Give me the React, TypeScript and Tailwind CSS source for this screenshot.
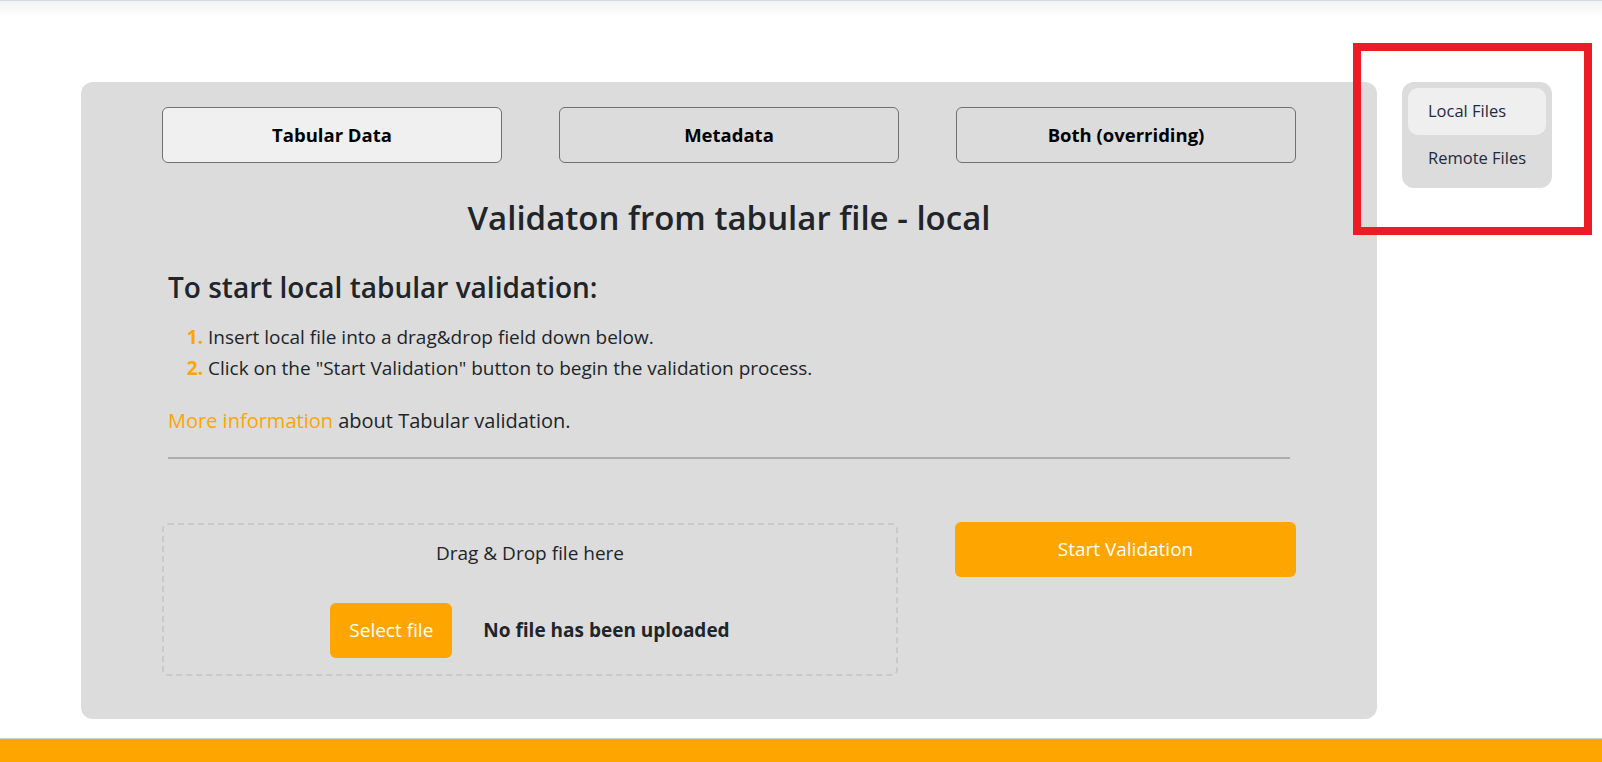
import React from 'react';

type Mode = { id: string; label: string };

const MODES: Mode[] = [
	{ id: 'tabular', label: 'Tabular Data' },
	{ id: 'metadata', label: 'Metadata' },
	{ id: 'both', label: 'Both (overriding)' },
];

const STEPS = [
	'Insert local file into a drag&drop field down below.',
	'Click on the "Start Validation" button to begin the validation process.',
];

function ModeTabs(props: { active: string; onPick: (id: string) => void }) {
	const { active, onPick } = props;
	return (
		<div className="flex justify-between">
			{MODES.map(m => (
				<button
					key={m.id}
					onClick={() => onPick(m.id)}
					className={`w-[340px] h-[56px] rounded-[6px] border border-[#707070] text-[18.5px] font-bold text-black ${active === m.id ? 'bg-[#f0f0f0]' : 'bg-[#dcdcdc]'}`}
				>
					{m.label}
				</button>
			))}
		</div>
	);
}

function DropZone() {
	return (
		<div className="w-[736px] rounded-[6px] border-2 border-dashed border-[#c9c9c9] pt-[14px] pb-[16px] text-center">
			<p className="text-[19px] leading-[28px]">Drag &amp; Drop file here</p>
			<div className="mt-[36px] flex items-center justify-center gap-[31px]">
				<button className="h-[55px] w-[122px] rounded-[6px] bg-[#ffa500] text-[19px] text-white">Select file</button>
				<span className="text-[19px] font-bold">No file has been uploaded</span>
			</div>
		</div>
	);
}

function SideNav(props: { active: string; onPick: (id: string) => void }) {
	const items = [
		{ id: 'local', label: 'Local Files' },
		{ id: 'remote', label: 'Remote Files' },
	];
	return (
		<aside className="w-[150px] rounded-[12px] bg-[#dcdcdc] p-[6px]">
			{items.map(it => (
				<button
					key={it.id}
					onClick={() => props.onPick(it.id)}
					className={`block h-[47px] w-full rounded-[10px] pl-[20px] text-left text-[16.5px] text-[#212a3e] ${props.active === it.id ? 'bg-[#efefef]' : ''}`}
				>
					{it.label}
				</button>
			))}
		</aside>
	);
}

export default function App() {
	const [mode, setMode] = React.useState('tabular');
	const [source, setSource] = React.useState('local');
	return (
		<div className="relative min-h-screen bg-white font-['Open_Sans',sans-serif] text-[#212529]">
			<div className="h-[18px] border-t border-[#d5d9e3] bg-gradient-to-b from-[#f3f3f5] to-white" />
			<div className="flex items-start gap-[25px] pl-[81px] pt-[64px]">
				<main className="w-[1296px] rounded-[12px] bg-[#dcdcdc] px-[81px] pt-[25px] pb-[43px]">
					<ModeTabs active={mode} onPick={setMode} />
					<h2 className="mt-[36px] text-center text-[33px] font-semibold leading-[38px]">Validaton from tabular file - local</h2>
					<section className="px-[6px]">
						<h3 className="mt-[33px] text-[28px] font-semibold leading-[34px]">To start local tabular validation:</h3>
						<ol className="mt-[18px] list-decimal pl-[40px] text-[19px] leading-[31px] marker:font-bold marker:text-[#ffa500]">
							{STEPS.map(s => (
								<li key={s}>{s}</li>
							))}
						</ol>
						<p className="mt-[22px] text-[20px] leading-[29px]">
							<a className="text-[#ffa500]">More information</a> about Tabular validation.
						</p>
						<hr className="mt-[22px] border-t-2 border-[#adadad]" />
					</section>
					<div className="mt-[64px] flex items-start justify-between">
						<DropZone />
						<button className="mt-[-1px] h-[55px] w-[341px] rounded-[6px] bg-[#ffa500] text-[19px] text-white">Start Validation</button>
					</div>
				</main>
				<SideNav active={source} onPick={setSource} />
			</div>
			<div className="mt-[19px] h-[60px] border-t border-[#cfcfcf] bg-[#ffa500]" />
			<div className="pointer-events-none absolute left-[1353px] top-[43px] h-[192px] w-[239px] border-[8px] border-[#ed1c24]" />
		</div>
	);
}
